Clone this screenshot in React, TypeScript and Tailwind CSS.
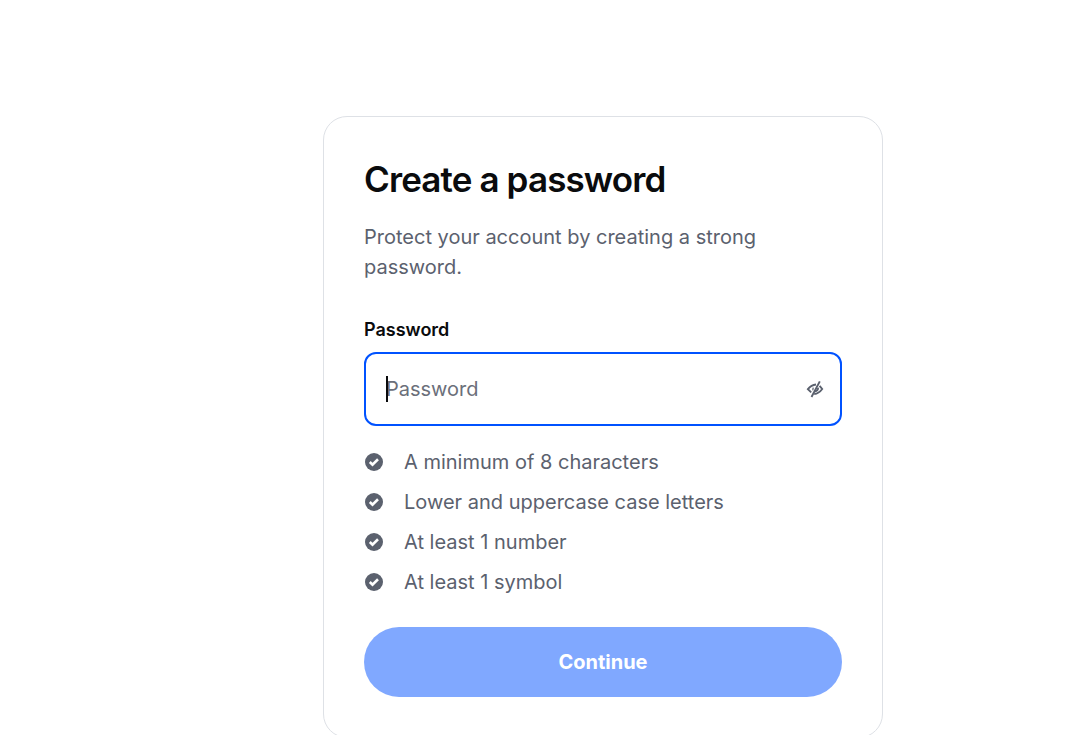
import React, { useState } from "react";

const requirements = [
  "A minimum of 8 characters",
  "Lower and uppercase case letters",
  "At least 1 number",
  "At least 1 symbol",
];

function CheckBadge() {
  return (
    <svg viewBox="0 0 20 20" className="size-5 shrink-0" aria-hidden="true">
      <circle cx="10" cy="10" r="9" fill="#5b616e" />
      <path d="M5.800 10 8.500 12.600 14 7.200" fill="none" stroke="#fff" strokeWidth="2.6" />
    </svg>
  );
}

function HiddenEye() {
  return (
    <svg viewBox="0 0 20 20" className="size-5" fill="none" stroke="#5b616e" strokeWidth="1.9" aria-hidden="true">
      <path d="M15.800 2.400 7.500 18" />
      <path d="M12 5.500C8.800 5.800 6.300 7.200 3.900 10.200L7.200 13.400" />
      <path d="M15.600 6.800 18.200 10C15.800 13.300 13.600 14.700 10.200 15" />
      <path d="M14 8.800C14.400 10.800 13 12 11 12.300" />
      <path d="M9.400 8.600C8.800 9.500 8.700 10.300 9 11.300" strokeWidth="1.200" />
    </svg>
  );
}

export default function App() {
  const [visible, setVisible] = useState(false);
  const [value, setValue] = useState("");

  return (
    <main className="h-screen overflow-hidden bg-white pt-[116px] pl-[130px] font-['Inter',sans-serif] text-xl text-[#5b616e]">
      <form
        className="mx-auto w-full max-w-[560px] rounded-3xl border border-[#dee1e6] p-10"
        onSubmit={(event) => event.preventDefault()}
      >
        <h1 className="text-[35px] leading-11 font-semibold tracking-tight text-[#0a0b0d]">Create a password</h1>
        <p className="mt-[21px] leading-[30px]">Protect your account by creating a strong password.</p>

        <label htmlFor="password" className="mt-9 block text-lg leading-6 font-semibold text-[#0a0b0d]">
          Password
        </label>
        <div className="relative mt-2.5 flex h-[74px] items-center rounded-xl border-2 border-[#0052ff] pr-4 pl-5">
          {value === "" && <span className="absolute left-5 h-[26px] w-0.5 bg-[#0a0b0d]" aria-hidden="true" />}
          <input
            id="password"
            type={visible ? "text" : "password"}
            placeholder="Password"
            value={value}
            onChange={(event) => setValue(event.target.value)}
            className="min-w-0 flex-1 bg-transparent leading-[30px] text-[#0a0b0d] outline-none placeholder:text-[#6b6f7a]"
          />
          <button type="button" aria-label="Show password" onClick={() => setVisible(!visible)}>
            <HiddenEye />
          </button>
        </div>

        <ul className="mt-[21px] flex flex-col gap-2.5 leading-[30px]">
          {requirements.map((text) => (
            <li key={text} className="flex items-center gap-5">
              <CheckBadge />
              {text}
            </li>
          ))}
        </ul>

        <button type="submit" className="mt-[30px] h-[70px] w-full rounded-full bg-[#80a8ff] font-bold text-white">
          Continue
        </button>
      </form>
    </main>
  );
}
